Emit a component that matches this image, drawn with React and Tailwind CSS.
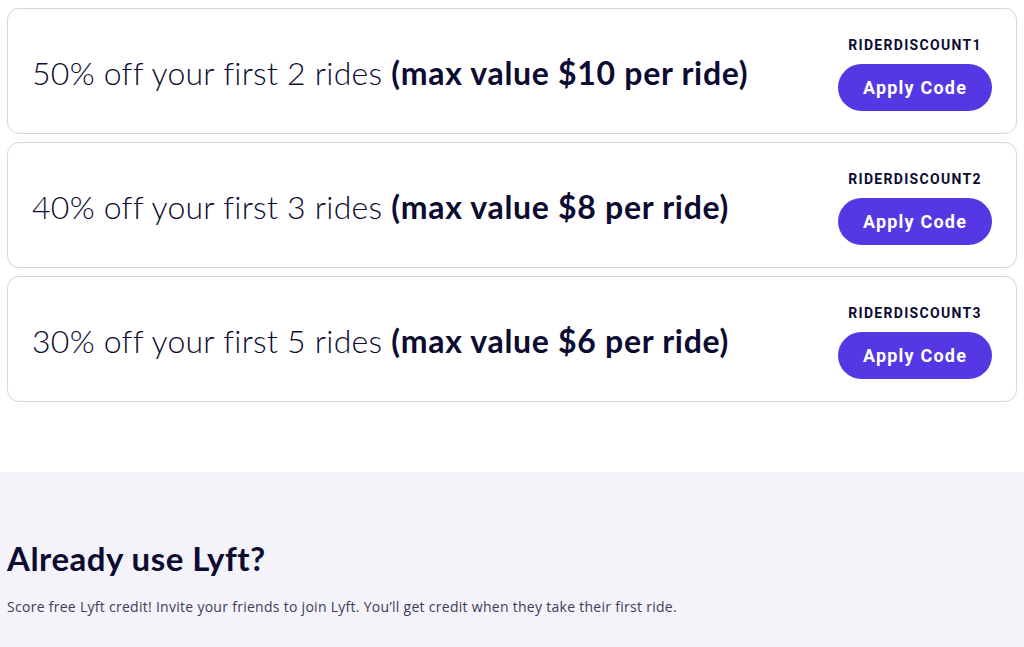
export default function App() {
  const offers = [
    { pct: "50", rides: "2", max: "$10", code: "RIDERDISCOUNT1" },
    { pct: "40", rides: "3", max: "$8", code: "RIDERDISCOUNT2" },
    { pct: "30", rides: "5", max: "$6", code: "RIDERDISCOUNT3" },
  ];
  return (
    <div className="w-[1024px] h-[647px] overflow-hidden bg-white font-['Lato',sans-serif] text-[#0c0b31]">
      <div className="flex flex-col gap-[8px] pt-[8px] pl-[7px] pr-[7px]">
        {offers.map((o) => (
          <div
            key={o.code}
            className="h-[126px] rounded-[12px] border border-[#d6d4e2] flex items-center justify-between pl-[24px] pr-[24px]"
          >
            <div className="text-[32px] font-light tracking-[0.25px] pt-[4px]">
              {o.pct}% off your first {o.rides} rides{" "}
              <span className="font-bold tracking-[0.7px]">(max value {o.max} per ride)</span>
            </div>
            <div className="flex flex-col items-center gap-[8px] pt-[4px]">
              <div className="text-[14px] font-bold font-['Roboto',sans-serif] tracking-[1.3px]">{o.code}</div>
              <button className="w-[154px] h-[47px] rounded-full bg-[#5538e4] text-white text-[18px] font-bold font-['Roboto',sans-serif] tracking-[1.2px]">
                Apply Code
              </button>
            </div>
          </div>
        ))}
      </div>
      <div className="mt-[70px] bg-[#f4f3f9] h-[200px] pt-[66px] pl-[7px]">
        <h2 className="text-[33px] font-bold tracking-[0.5px] leading-[40px]">Already use Lyft?</h2>
        <p className="mt-[18px] text-[14px] text-[#3d3c57] font-['Open_Sans',sans-serif] tracking-[0.28px]">
          Score free Lyft credit! Invite your friends to join Lyft. You’ll get credit when they take their first ride.
        </p>
      </div>
    </div>
  );
}
